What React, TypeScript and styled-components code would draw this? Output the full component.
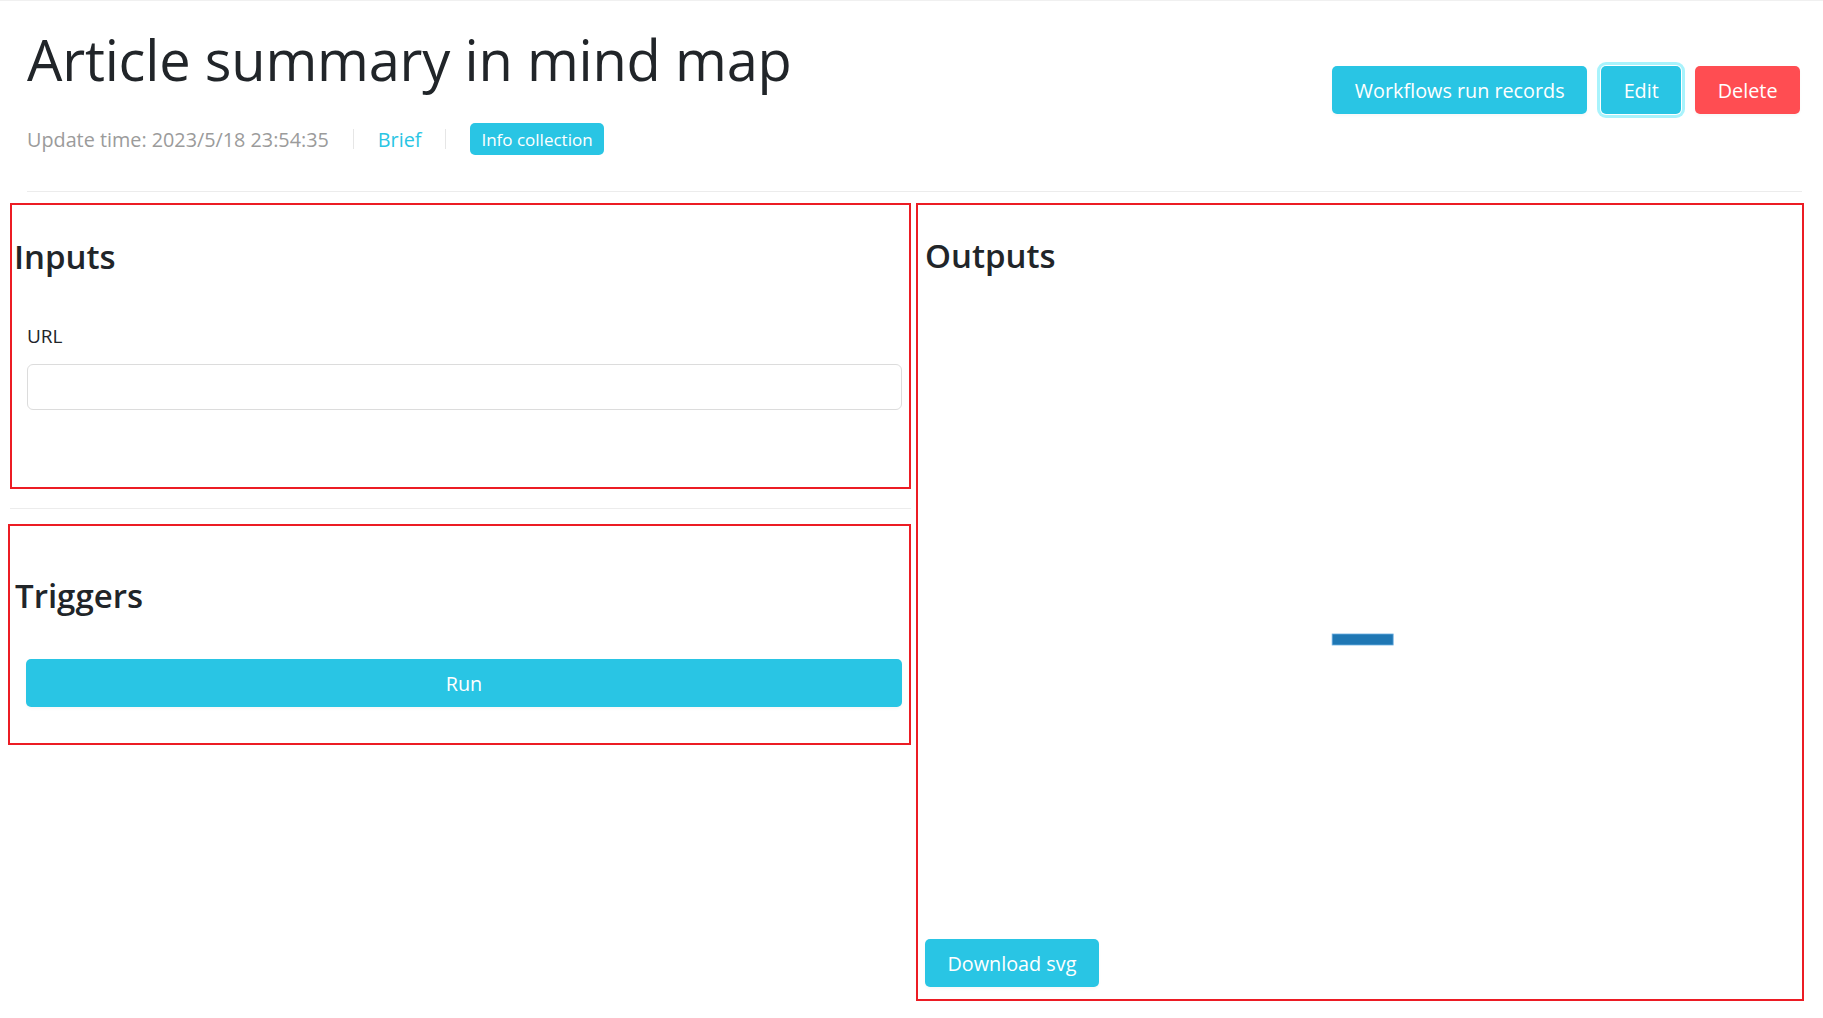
import React from "react";
import styled, { createGlobalStyle } from "styled-components";

const GlobalStyle = createGlobalStyle`
  * { box-sizing: border-box; }
  html, body { margin: 0; padding: 0; background: #ffffff; }
  body {
    font-family: "Open Sans", "Noto Sans", "Liberation Sans", sans-serif;
    color: #212529;
  }
`;

const CYAN = "#29c5e4";
const RED_MARK = "#ec1c24";

const Page = styled.div`
  border-top: 1px solid #f0f0f0;
  padding: 0 19px 40px 8px;
  width: 1823px;
`;

const Header = styled.header`
  display: flex;
  justify-content: space-between;
  align-items: flex-start;
  margin: 0 2px 0 19px;
  padding-bottom: 36px;
  border-bottom: 1px solid #ececec;
`;

const TitleBlock = styled.div`
  display: flex;
  flex-direction: column;
`;

const Title = styled.h1`
  margin: 25px 0 0;
  font-size: 56px;
  font-weight: 500;
  line-height: 1.2;
  letter-spacing: -0.2px;
`;

const Meta = styled.div`
  display: flex;
  align-items: center;
  margin-top: 30px;
  font-size: 19.8px;
  height: 32px;
`;

const MetaText = styled.span`
  color: #9b9b9b;
`;

const MetaLink = styled.a`
  color: ${CYAN};
  text-decoration: none;
`;

const Divider = styled.span`
  width: 1px;
  height: 20px;
  background: #e6e6e6;
  margin: 0 24px;
`;

const Badge = styled.span`
  display: inline-flex;
  align-items: center;
  height: 32px;
  padding: 0 11px;
  border-radius: 5px;
  background: ${CYAN};
  color: #fff;
  font-size: 17px;
`;

const Actions = styled.div`
  display: flex;
  gap: 14px;
  margin: 65px 2px 0 0;
`;

const Button = styled.button<{ $variant?: "info" | "danger"; $focused?: boolean; $block?: boolean }>`
  display: inline-flex;
  align-items: center;
  justify-content: center;
  height: 48px;
  padding: 0 22.5px;
  border: none;
  border-radius: 5px;
  font-family: inherit;
  font-size: 19.8px;
  color: #fff;
  cursor: pointer;
  background: ${(p) => (p.$variant === "danger" ? "#ff4d52" : CYAN)};
  width: ${(p) => (p.$block ? "100%" : "auto")};
  box-shadow: ${(p) =>
    p.$focused ? "0 0 0 1px #fff, 0 0 0 4px #a8f3fc" : "0 2px 3px rgba(0,0,0,0.03)"};
`;

const Main = styled.div`
  display: grid;
  grid-template-columns: 903px 888px;
  column-gap: 5px;
  margin-top: 11px;
  align-items: start;
`;

const LeftColumn = styled.div`
  display: flex;
  flex-direction: column;
`;

const Marked = styled.section`
  border: 2px solid ${RED_MARK};
`;

const InputsPanel = styled(Marked)`
  margin-left: 2px;
  height: 286px;
  padding: 33px 7px 0 2px;
`;

const TriggersPanel = styled(Marked)`
  height: 221px;
  padding: 51px 7px 0 5px;
`;

const OutputsPanel = styled(Marked)`
  height: 798px;
  padding: 32px 7px 12px 7px;
  display: flex;
  flex-direction: column;
`;

const SectionTitle = styled.h2`
  margin: 0;
  font-size: 33px;
  font-weight: 600;
  line-height: 38px;
`;

const FieldGroup = styled.div`
  display: flex;
  flex-direction: column;
  padding-left: 13px;
  margin-top: 47px;
`;

const Label = styled.label`
  font-size: 19px;
  line-height: 27px;
`;

const TextInput = styled.input`
  margin-top: 14px;
  height: 46px;
  border: 1px solid #dcdcdc;
  border-radius: 6px;
  padding: 0 12px;
  font-family: inherit;
  font-size: 18px;
`;

const SoftRule = styled.hr`
  margin: 19px 0 15px 2px;
  border: none;
  border-top: 1px solid #ececec;
`;

const RunRow = styled.div`
  padding-left: 11px;
  margin-top: 44px;
`;

const MapArea = styled.div`
  flex: 1;
  display: flex;
  flex-direction: column;
  justify-content: flex-start;
`;

const MapSvg = styled.svg`
  display: block;
  width: 100%;
  height: 640px;
  margin-top: 20px;
`;

const DownloadRow = styled.div`
  display: flex;
`;

export default function App() {
  return (
    <>
      <GlobalStyle />
      <Page>
        <Header>
          <TitleBlock>
            <Title>Article summary in mind map</Title>
            <Meta>
              <MetaText>Update time: 2023/5/18 23:54:35</MetaText>
              <Divider />
              <MetaLink href="#">Brief</MetaLink>
              <Divider />
              <Badge>Info collection</Badge>
            </Meta>
          </TitleBlock>
          <Actions>
            <Button>Workflows run records</Button>
            <Button $focused>Edit</Button>
            <Button $variant="danger">Delete</Button>
          </Actions>
        </Header>
        <Main>
          <LeftColumn>
            <InputsPanel>
              <SectionTitle>Inputs</SectionTitle>
              <FieldGroup>
                <Label htmlFor="url">URL</Label>
                <TextInput id="url" type="text" />
              </FieldGroup>
            </InputsPanel>
            <SoftRule />
            <TriggersPanel>
              <SectionTitle>Triggers</SectionTitle>
              <RunRow>
                <Button $block>Run</Button>
              </RunRow>
            </TriggersPanel>
          </LeftColumn>
          <OutputsPanel>
            <SectionTitle>Outputs</SectionTitle>
            <MapArea>
              <MapSvg>
                <rect x="46.8%" y="339" width="61" height="11" fill="#1f77b4" stroke="#6aaee0" strokeWidth="0.8" />
              </MapSvg>
            </MapArea>
            <DownloadRow>
              <Button>Download svg</Button>
            </DownloadRow>
          </OutputsPanel>
        </Main>
      </Page>
    </>
  );
}
